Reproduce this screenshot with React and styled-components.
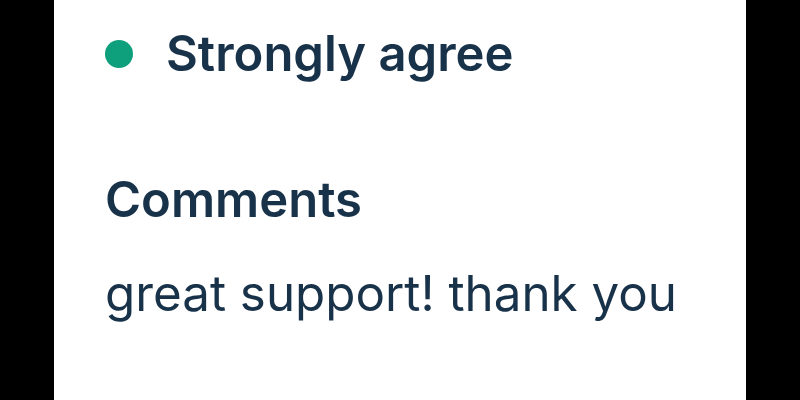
import React from "react";
import styled, { createGlobalStyle } from "styled-components";

const Global = createGlobalStyle`
  html, body { margin: 0; padding: 0; background: #000; }
  body { font-family: Inter, "Noto Sans", sans-serif; }
`;

const Stage = styled.div`
  width: 800px;
  height: 400px;
  background: #000;
  display: flex;
  justify-content: center;
`;

const Panel = styled.div`
  width: 692px;
  height: 400px;
  background: #fff;
  box-sizing: border-box;
  padding: 18px 0 0 51px;
  display: flex;
  flex-direction: column;
  color: #18324a;
`;

const Answer = styled.div`
  display: flex;
  align-items: center;
  gap: 33px;
  height: 72px;
`;

const Dot = styled.span`
  width: 28px;
  height: 28px;
  border-radius: 50%;
  background: ${(p) => p.$color};
  flex: none;
`;

const AnswerText = styled.span`
  font-size: 49px;
  font-weight: 600;
  line-height: 60px;
`;

const Label = styled.div`
  margin-top: 80px;
  font-size: 49px;
  font-weight: 600;
  line-height: 60px;
`;

const Body = styled.div`
  margin-top: 33px;
  font-size: 49.3px;
  font-weight: 400;
  line-height: 60px;
`;

export default function App() {
  return (
    <>
      <Global />
      <Stage>
        <Panel>
          <Answer>
            <Dot $color="#0e9f7c" />
            <AnswerText>Strongly agree</AnswerText>
          </Answer>
          <Label>Comments</Label>
          <Body>great support! thank you</Body>
        </Panel>
      </Stage>
    </>
  );
}
